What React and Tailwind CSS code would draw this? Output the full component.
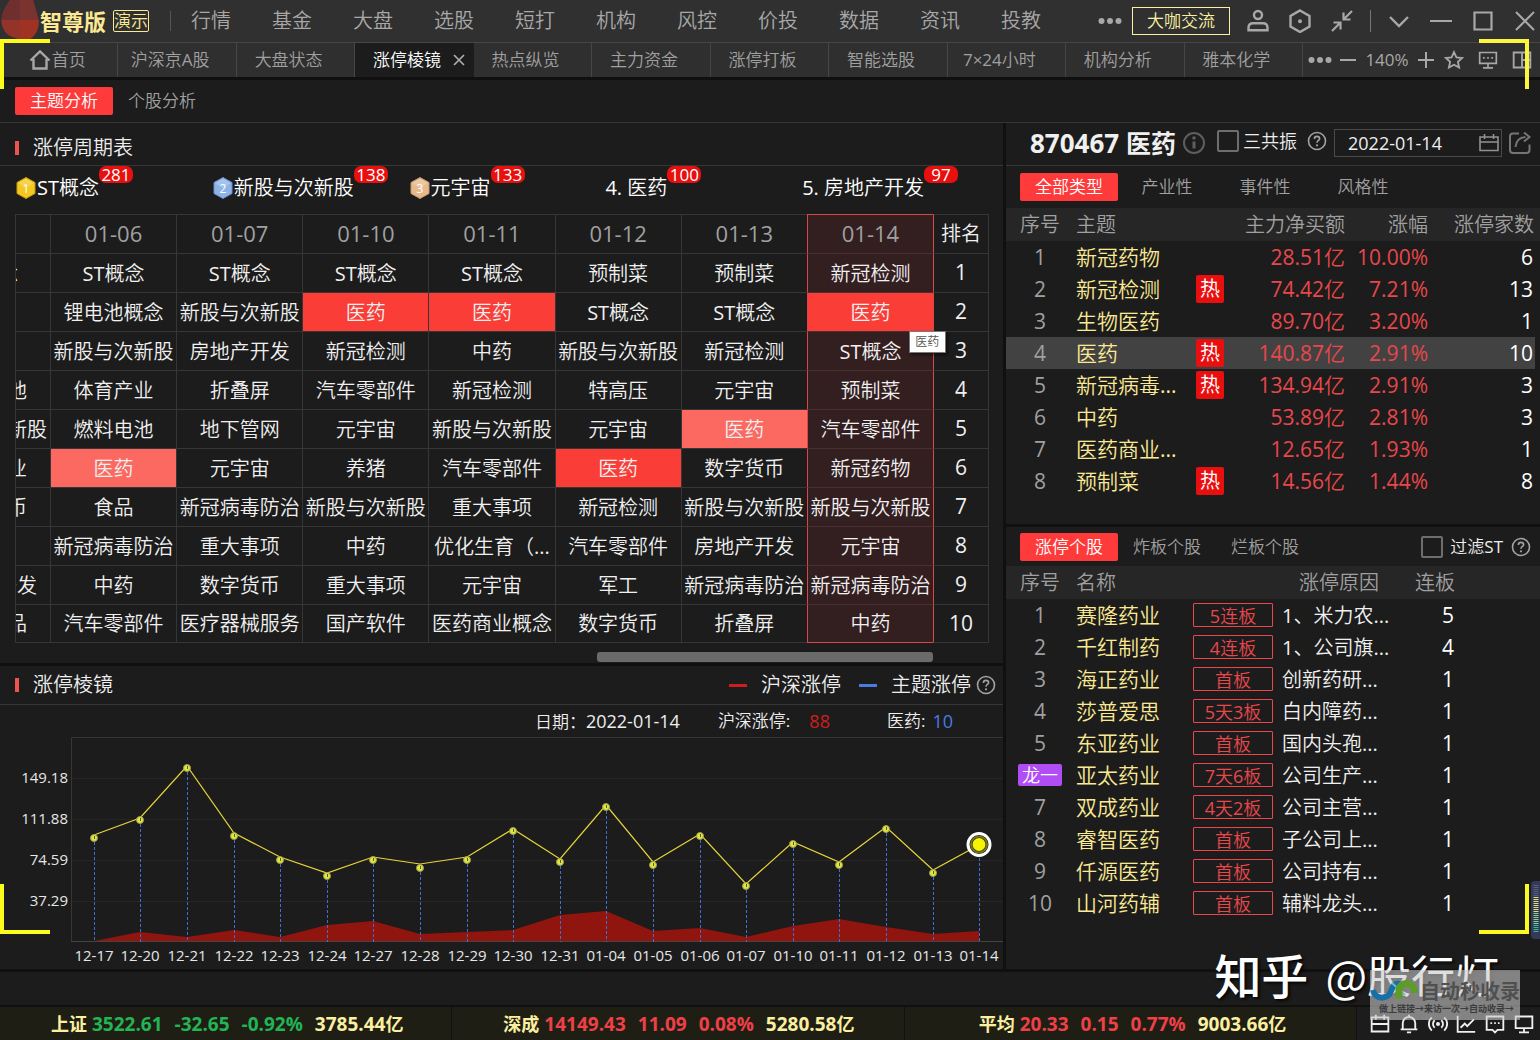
import React from "react";

const NAV = ["行情", "基金", "大盘", "选股", "短打", "机构", "风控", "价投", "数据", "资讯", "投教"];
const TABS = ["首页", "沪深京A股", "大盘状态", "涨停棱镜", "热点纵览", "主力资金", "涨停打板", "智能选股", "7×24小时", "机构分析", "雅本化学"];

const LEADERS = [
  { medal: "1", fill: "#f3c91f", edge: "#c99a10", name: "ST概念", count: 281 },
  { medal: "2", fill: "#8db4e8", edge: "#6b8fc4", name: "新股与次新股", count: 138 },
  { medal: "3", fill: "#e8b98c", edge: "#c79a70", name: "元宇宙", count: 133 },
  { name: "4. 医药", count: 100 },
  { name: "5. 房地产开发", count: 97 },
];

const DATES = ["01-06", "01-07", "01-10", "01-11", "01-12", "01-13", "01-14"];
const CYCLE = [
  ["ST概念", "ST概念", "ST概念", "ST概念", "ST概念", "预制菜", "预制菜", "新冠检测"],
  ["元宇宙", "锂电池概念", "新股与次新股", "医药", "医药", "ST概念", "ST概念", "医药"],
  ["中药", "新股与次新股", "房地产开发", "新冠检测", "中药", "新股与次新股", "新冠检测", "ST概念"],
  ["燃料电池", "体育产业", "折叠屏", "汽车零部件", "新冠检测", "特高压", "元宇宙", "预制菜"],
  ["新股与次新股", "燃料电池", "地下管网", "元宇宙", "新股与次新股", "元宇宙", "医药", "汽车零部件"],
  ["体育产业", "医药", "元宇宙", "养猪", "汽车零部件", "医药", "数字货币", "新冠药物"],
  ["数字货币", "食品", "新冠病毒防治", "新股与次新股", "重大事项", "新冠检测", "新股与次新股", "新股与次新股"],
  ["军工", "新冠病毒防治", "重大事项", "中药", "优化生育（...", "汽车零部件", "房地产开发", "元宇宙"],
  ["房地产开发", "中药", "数字货币", "重大事项", "元宇宙", "军工", "新冠病毒防治", "新冠病毒防治"],
  ["医美产品", "汽车零部件", "医疗器械服务", "国产软件", "医药商业概念", "数字货币", "折叠屏", "中药"],
];
const PALE = ["4-6", "5-1"];

const THEMES = [
  ["新冠药物", false, "28.51亿", "10.00%", 6],
  ["新冠检测", true, "74.42亿", "7.21%", 13],
  ["生物医药", false, "89.70亿", "3.20%", 1],
  ["医药", true, "140.87亿", "2.91%", 10],
  ["新冠病毒...", true, "134.94亿", "2.91%", 3],
  ["中药", false, "53.89亿", "2.81%", 3],
  ["医药商业...", false, "12.65亿", "1.93%", 1],
  ["预制菜", true, "14.56亿", "1.44%", 8],
];

const STOCKS = [
  ["赛隆药业", "5连板", "1、米力农...", 5],
  ["千红制药", "4连板", "1、公司旗...", 4],
  ["海正药业", "首板", "创新药研...", 1],
  ["莎普爱思", "5天3板", "白内障药...", 1],
  ["东亚药业", "首板", "国内头孢...", 1],
  ["亚太药业", "7天6板", "公司生产...", 1],
  ["双成药业", "4天2板", "公司主营...", 1],
  ["睿智医药", "首板", "子公司上...", 1],
  ["仟源医药", "首板", "公司持有...", 1],
  ["山河药辅", "首板", "辅料龙头...", 1],
];

const INDEXES = [
  { name: "上证", values: ["3522.61", "-32.65", "-0.92%"], amount: "3785.44", up: false },
  { name: "深成", values: ["14149.43", "11.09", "0.08%"], amount: "5280.58", up: true },
  { name: "平均", values: ["20.33", "0.15", "0.77%"], amount: "9003.66", up: true },
];

/* label, x, marker y, line y, area y */
const POINTS = [
  ["12-17", 94, 101, 98, 204],
  ["12-20", 140, 83, 81, 195],
  ["12-21", 187, 31, 29, 200],
  ["12-22", 234, 99, 96, 193],
  ["12-23", 280, 123, 120, 200],
  ["12-24", 327, 139, 136, 188],
  ["12-27", 373, 123, 120, 184],
  ["12-28", 420, 131, 127, 197],
  ["12-29", 467, 123, 120, 195],
  ["12-30", 513, 94, 92, 193],
  ["12-31", 560, 125, 122, 178],
  ["01-04", 606, 70, 68, 174],
  ["01-05", 653, 128, 125, 194],
  ["01-06", 700, 99, 97, 191],
  ["01-07", 746, 149, 147, 200],
  ["01-10", 793, 107, 105, 189],
  ["01-11", 839, 128, 125, 182],
  ["01-12", 886, 92, 90, 190],
  ["01-13", 933, 136, 133, 197],
  ["01-14", 979, 107, 108, 194],
];

function Icon({ size = 24, sw = 2, className = "", children, box = 24 }) {
  return (
    <svg width={size} height={size} viewBox={`0 0 ${box} ${box}`} fill="none" stroke="currentColor" strokeWidth={sw} className={`shrink-0 ${className}`} aria-hidden="true">
      {children}
    </svg>
  );
}

const IconUser = () => (
  <Icon sw={2.4}><circle cx="12" cy="6" r="4" /><path d="M2.500 21.200v-2.400c0-3 2-4.600 4.600-4.600h9.800c2.600 0 4.600 1.600 4.600 4.600v2.400z" /></Icon>
);
const IconHex = () => (
  <Icon sw={2.4}><path d="M12 1.500l9.500 5.500v10.500L12 23l-9.500-5.500V7z" /><circle cx="12" cy="12.200" r="2" fill="currentColor" stroke="none" /></Icon>
);
const IconShrink = () => (
  <Icon sw={2.2}><path d="M22 2l-8 8M13.500 3.500v7h7M2 22l8-8M3.500 13.500h7v7" /></Icon>
);
const IconHelp = ({ size = 20 }) => (
  <Icon size={size} box={20} sw={1.6} className="text-[#a2a2a2]">
    <circle cx="10" cy="10" r="8.500" />
    <path d="M7.400 8c0-1.600 1.100-2.600 2.600-2.600s2.600 1 2.600 2.300c0 1.700-2.600 1.900-2.600 4" />
    <circle cx="10" cy="14.300" r="1.100" fill="currentColor" stroke="none" />
  </Icon>
);
const Dots = () => (
  <Icon size={24} sw={0} className="text-[#a8a8a8]">
    <circle cx="3.500" cy="12" r="3" fill="currentColor" /><circle cx="12" cy="12" r="3" fill="currentColor" /><circle cx="20.500" cy="12" r="3" fill="currentColor" />
  </Icon>
);

function IconButton({ label, children }) {
  return <button type="button" aria-label={label} className="flex shrink-0 items-center justify-center">{children}</button>;
}

function TopBar() {
  return (
    <header className="relative flex h-[42px] items-center bg-[#303030] text-[#a8a8a8]">
      <svg width="42" height="42" viewBox="0 0 42 42" className="shrink-0" aria-hidden="true">
        <path d="M10 0C6 6 2 12 1.500 20c0 8 5 15 13 17c4 5 15 5 19-1c4-5 6-10 5-17L33 0z" fill="#8e352c" />
        <path d="M10 0h10v20H1.500C2 12 6 6 10 0z" fill="#6f2f2e" />
        <path d="M20 0h13l5 19v1H20z" fill="#7b3330" />
        <path d="M1.500 20H20v18c-10 1-18.500-6-18.500-18z" fill="#93342a" />
        <path d="M20 20h18.500c0 8-1 12-5 16c-3 4-9 5-13.500 3z" fill="#a03224" />
      </svg>
      <div className="-ml-[2px] font-['Open_Sans','Noto_Sans_CJK_SC',sans-serif] text-[22px] font-bold leading-[30px] text-[#fbe993]">智尊版</div>
      <div className="ml-[7px] h-[22px] rounded-[2px] border border-[#fbe993] text-[17px] leading-[20px] text-[#fbe993]">演示</div>
      <div className="ml-[21px] h-[20px] w-px bg-[#555]" />
      <nav className="ml-[20px] flex flex-1 gap-[41px] text-[20px] leading-[30px]">
        {NAV.map((n) => <a key={n} href="#" className="whitespace-nowrap">{n}</a>)}
      </nav>
      <div className="flex shrink-0 items-center pr-[3px]">
        <IconButton label="更多"><Dots /></IconButton>
        <button type="button" className="ml-[10px] h-[28px] w-[98px] border border-[#fbf0a0] text-[17px] leading-[26px] text-[#fbf0a0]">大咖交流</button>
        <div className="ml-[16px] flex gap-[18px]">
          <IconButton label="用户"><IconUser /></IconButton>
          <IconButton label="设置"><IconHex /></IconButton>
          <IconButton label="收起"><IconShrink /></IconButton>
        </div>
        <div className="ml-[16px] h-[22px] w-px bg-[#777]" />
        <div className="ml-[16px] flex gap-[18px]">
          <IconButton label="下拉"><Icon sw={2.4}><path d="M3 8l9 9 9-9" /></Icon></IconButton>
          <IconButton label="最小化"><Icon sw={2}><path d="M1 12h22" /></Icon></IconButton>
          <IconButton label="最大化"><Icon sw={2.2}><path d="M3.500 3.500h17v17h-17z" /></Icon></IconButton>
          <IconButton label="关闭"><Icon sw={2}><path d="M3 3l18 18M21 3L3 21" /></Icon></IconButton>
        </div>
      </div>
    </header>
  );
}

function TabBar() {
  return (
    <div className="flex h-[38px] items-stretch border-b-[3px] border-t border-b-[#101010] border-t-[#464646] bg-[#2f2f2f] text-[17px] leading-[34px] text-[#a0a0a0]">
      <div className="flex flex-1">
        {TABS.map((t) => {
          const active = t === "涨停棱镜";
          const tone = active ? "border-[#1c1c1c] bg-[#1c1c1c] text-white" : "border-[#464646]";
          return (
            <button
              key={t}
              type="button"
              className={`relative flex flex-1 basis-0 items-center justify-center whitespace-nowrap border-r px-[2px] ${tone}`}
            >
              {t === "首页" && (
                <Icon size={24} sw={2.4} className="text-[#a8a8a8]"><path d="M5.500 11v9.500h13V11M2.500 12.500L12 3.500l9.500 9" /></Icon>
              )}
              <span className={t === "首页" ? "mr-[4px]" : "mr-[14px]"}>{t}</span>
              {active && (
                <Icon size={12} box={12} sw={1.6} className="absolute right-[8px] text-[#b0b0b0]"><path d="M1 1l10 10M11 1L1 11" /></Icon>
              )}
            </button>
          );
        })}
      </div>
      <div className="flex w-[237px] shrink-0 items-center text-[#a8a8a8]">
        <div className="ml-[5px]"><IconButton label="更多标签"><Dots /></IconButton></div>
        <div className="ml-[7px] flex items-center gap-[7px]">
          <IconButton label="缩小"><Icon size={18} box={18} sw={2}><path d="M1 9h16" /></Icon></IconButton>
          <span className="w-[46px] text-center text-[17px] leading-[34px]">140%</span>
          <IconButton label="放大"><Icon size={18} box={18} sw={2}><path d="M1 9h16M9 1v16" /></Icon></IconButton>
        </div>
        <div className="ml-[9px] flex items-center gap-[14px]">
          <IconButton label="收藏"><Icon size={20} sw={2.2}><path d="M12 2.500l2.900 6.300 6.900.8-5.100 4.700 1.400 6.800L12 17.700l-6.100 3.400 1.400-6.800-5.100-4.700 6.900-.8z" /></Icon></IconButton>
          <IconButton label="屏幕"><Icon size={20} sw={2}><path d="M2 3h20v13H2zM12 16v5M6 21.500h12M6 9.500h2M11 9.500h2M16 9.500h2" /></Icon></IconButton>
          <IconButton label="布局"><Icon size={20} sw={2.2}><path d="M2 3h20v18H2zM12 3v18M12 12h10" /></Icon></IconButton>
        </div>
      </div>
    </div>
  );
}

function Pills({ items }) {
  return (
    <div className="flex text-[17px] leading-[28px]">
      {items.map((t, i) => (
        <button key={t} type="button" className={`h-[28px] w-[98px] rounded-[2px] ${i === 0 ? "bg-[#fe3b3a] text-white" : "text-[#a0a0a0]"}`}>{t}</button>
      ))}
    </div>
  );
}

function SectionTitle({ children }) {
  return (
    <h2 className="flex items-center gap-[14px] pl-[15px] text-[20px] font-normal leading-[30px] text-[#eee]">
      <span className="h-[14px] w-[4px] bg-[#ef5350]" />
      {children}
    </h2>
  );
}

function Leaders() {
  return (
    <ul className="grid h-[48px] grid-cols-5 pl-[15px] pr-[4px] pt-[7px] text-[20px] leading-[30px] text-white">
      {LEADERS.map((l) => (
        <li key={l.name} className="flex items-center self-start whitespace-nowrap">
          {l.medal && (
            <svg width="22" height="24" viewBox="0 0 22 24" className="shrink-0" aria-hidden="true">
              <path d="M11 1.500L20 6.500v11L11 22.500L2 17.500v-11z" fill={l.fill} stroke={l.edge} strokeLinejoin="round" />
              <path d="M11 2.500L19 7L11 12L3 7z" fill="#fff" opacity=".2" />
              <text x="11" y="16.500" textAnchor="middle" fontSize="12" fill="#fff">{l.medal}</text>
            </svg>
          )}
          <span className="relative">
            {l.name}
            <span className="absolute -top-[7px] left-full h-[17px] w-[34px] rounded-[7px] bg-[#e8100f] text-center text-[17px] leading-[17px]">{l.count}</span>
          </span>
        </li>
      ))}
    </ul>
  );
}

function CycleTable() {
  const line = "border-l border-t border-[#363636]";
  return (
    <table className="ml-[15px] w-[calc(100%-29px)] table-fixed border-separate border-spacing-0 text-center text-[20px] leading-[30px] text-[#f0f0f0]">
      <colgroup>
        <col className="w-[35px]" />
        {DATES.map((d) => <col key={d} />)}
        <col className="w-[56px]" />
      </colgroup>
      <thead>
        <tr className="h-[39px]">
          <th className={line} aria-label="更早" />
          {DATES.map((d, i) => (
            <th key={d} className={`border-l border-t p-0 pb-[2px] text-[22px] font-normal text-[#a0a0a0] ${i === 6 ? "border-[#d9474b] bg-[#331e20]" : "border-[#363636]"}`}>{d}</th>
          ))}
          <th className="whitespace-nowrap border-l border-r border-t border-l-[#d9474b] border-r-[#363636] border-t-[#363636] p-0 font-normal">排名</th>
        </tr>
      </thead>
      <tbody>
        {CYCLE.map((row, r) => (
          <tr key={r} className="h-[39px]">
            {row.map((cell, c) => {
              const last = r === CYCLE.length - 1;
              if (c === 0) {
                return (
                  <td key={c} className={`p-0 pt-px ${line} ${last ? "border-b" : ""}`}>
                    <div className="flex justify-end overflow-hidden"><div className="w-[126px] shrink-0">{cell}</div></div>
                  </td>
                );
              }
              const hot = cell === "医药";
              const pale = PALE.includes(`${r}-${c}`);
              const bg = hot ? (pale ? "bg-[#fb6961]" : "bg-[#fa3d37]") : c === 7 ? "bg-[#331e20]" : "";
              const edge = c === 7 ? `border-l-[#d9474b] border-t-[#4a3032] ${last ? "border-b border-b-[#d9474b]" : ""}` : `border-[#363636] ${last ? "border-b" : ""}`;
              return (
                <td key={c} className={`relative whitespace-nowrap border-l border-t p-0 pt-px ${edge} ${bg}`}>
                  {cell}
                  {r === 1 && c === 7 && (
                    <span role="tooltip" className="absolute left-[101px] top-[38px] z-10 h-[22px] w-[37px] border border-[#777] bg-white text-center text-[12px] leading-[20px] text-[#555] shadow-[2px_2px_3px_rgba(0,0,0,0.5)]">医药</span>
                  )}
                </td>
              );
            })}
            <td className={`border-l border-r border-t border-l-[#d9474b] border-r-[#363636] border-t-[#363636] p-0 pb-[2px] text-[21px] ${r === 9 ? "border-b border-b-[#363636]" : ""}`}>{r + 1}</td>
          </tr>
        ))}
      </tbody>
    </table>
  );
}

function TrendChart() {
  const linePts = POINTS.map((p) => `${p[1]},${p[3]}`).join(" ");
  const area = `94,205 ${POINTS.map((p) => `${p[1]},${p[4]}`).join(" ")} 979,205`;
  return (
    <svg viewBox="0 0 1003 232" className="block w-full" role="img" aria-label="涨停走势">
      <path d="M71.500 205V.500H1003" fill="none" stroke="#363636" />
      {[["149.18", 41], ["111.88", 82], ["74.59", 123], ["37.29", 164]].map(([t, y]) => (
        <g key={t}>
          <path d={`M72 ${y + 0.5}H1003`} stroke="#262626" />
          <text x="68" y={y + 5} textAnchor="end" fontSize="15" fill="#e6e6e6">{t}</text>
        </g>
      ))}
      <polygon points={area} fill="#8f150e" />
      <path d="M71 204.500H1003" stroke="#444" />
      {POINTS.map((p) => (
        <path key={p[0]} d={`M${p[1] + 0.5} ${p[2] + 4}V205`} stroke="#3f6fd0" strokeDasharray="3 2" />
      ))}
      <polyline points={linePts} fill="none" stroke="#e8d43a" strokeWidth="1.200" />
      {POINTS.slice(0, -1).map((p) => (
        <g key={p[0]}>
          <circle cx={p[1]} cy={p[2]} r="3.500" fill="#dfe73a" stroke="#9a9a58" />
          <path d={`M${p[1] + 0.5} ${p[2] - 2}v3`} stroke="#5a5a20" />
        </g>
      ))}
      <circle cx="979" cy="107.500" r="11" fill="#1c1c1c" stroke="#fff" strokeWidth="3" />
      <circle cx="979" cy="107.500" r="8" fill="none" stroke="#77771c" strokeWidth="2" />
      <circle cx="979" cy="107.500" r="6.500" fill="#f8f400" />
      {POINTS.map((p) => (
        <text key={p[0]} x={p[1]} y="224" textAnchor="middle" fontSize="15" fill="#e6e6e6">{p[0]}</text>
      ))}
    </svg>
  );
}

function LeftPanel() {
  return (
    <section className="min-w-0 flex-1">
      <div className="flex h-[43px] items-center border-b border-[#363636] pt-[8px]"><SectionTitle>涨停周期表</SectionTitle></div>
      <Leaders />
      <CycleTable />
      <div className="flex h-[20px] justify-end pr-[70px] pt-[9px]"><div className="h-[10px] w-[36%] rounded-[3px] bg-[#6a6a6a]" /></div>
      <div className="flex h-[42px] items-center justify-between border-b border-t-[3px] border-b-[#363636] border-t-[#101010]">
        <SectionTitle>涨停棱镜</SectionTitle>
        <div className="flex items-center pr-[7px] text-[20px] leading-[30px] text-[#eee]">
          <span className="mr-[14px] h-[3px] w-[18px] bg-[#d01c1c]" />沪深涨停
          <span className="ml-[18px] mr-[14px] h-[3px] w-[18px] bg-[#4a7be0]" />主题涨停
          <span className="ml-[5px]"><IconHelp /></span>
        </div>
      </div>
      <div className="flex h-[32px] items-center justify-end pr-[50px] text-[17px] leading-[26px] text-[#eee]">
        <span>日期：<span className="text-[18px]">2022-01-14</span></span>
        <span className="ml-[38px]">沪深涨停:</span>
        <span className="ml-[19px] text-[18px] text-[#d01c1c]">88</span>
        <span className="ml-[57px]">医药:</span>
        <span className="ml-[7px] text-[18px] text-[#4a7be0]">10</span>
      </div>
      <TrendChart />
    </section>
  );
}

function CheckLabel({ id, label, text }) {
  return (
    <div className="flex items-center">
      <input id={id} type="checkbox" className="h-[22px] w-[22px] shrink-0 appearance-none rounded-[2px] border-2 border-[#6e6e6e]" />
      <label htmlFor={id} className={`whitespace-nowrap text-[#eee] ${text}`}>{label}</label>
    </div>
  );
}

function RightPanel() {
  return (
    <aside className="w-[537px] shrink-0 border-l-[3px] border-[#101010]">
      <div className="flex h-[43px] items-center border-b border-[#363636] pb-[2px] pl-[24px] pr-[8px]">
        <h1 className="whitespace-nowrap font-['Open_Sans','Noto_Sans_CJK_SC',sans-serif] text-[26px] font-bold leading-[34px] text-[#f0f0f0]">870467 <span className="text-[25px]">医药</span></h1>
        <div className="ml-[6px] flex-1">
          <IconButton label="信息"><Icon size={24} sw={2} className="text-[#5e5e5e]"><circle cx="12" cy="12" r="10" /><path d="M12 10.500v7" strokeWidth="3" /><circle cx="12" cy="7" r="1.800" fill="currentColor" stroke="none" /></Icon></IconButton>
        </div>
        <div className="flex items-center pb-[4px]">
          <CheckLabel id="resonance" label="三共振" text="ml-[4px] text-[18px] leading-[26px]" />
          <div className="ml-[10px] mr-[7px]"><IconButton label="帮助"><IconHelp /></IconButton></div>
        </div>
        <div className="flex h-[28px] w-[168px] items-center border border-[#4a4a4a] pl-[13px] pr-[2px]">
          <input aria-label="日期" defaultValue="2022-01-14" className="w-0 flex-1 bg-transparent text-[18px] leading-[26px] text-[#eee] outline-none" />
          <IconButton label="选择日期"><Icon size={20} box={20} sw={1.6} className="text-[#8f9196]"><path d="M1 4h18v13.500H1zM1 9h18M5.500 1v5M14.500 1v5" /></Icon></IconButton>
        </div>
        <div className="ml-[6px]">
          <IconButton label="分享"><Icon size={24} sw={2} className="text-[#757575]"><path d="M11 2.500H5a3 3 0 0 0-3 3V19a3 3 0 0 0 3 3h13.500a3 3 0 0 0 3-3v-5.500M7.500 16c.5-6 4-9.500 10-10M16 1.500L21.500 6L16 10.500" /></Icon></IconButton>
        </div>
      </div>
      <div className="flex h-[42px] items-center pl-[14px]"><Pills items={["全部类型", "产业性", "事件性", "风格性"]} /></div>
      <div className="pb-[27px]">
        <table className="w-[529px] table-fixed border-collapse text-[21px] leading-[30px]">
          <colgroup><col className="w-[68px]" /><col className="w-[120px]" /><col className="w-[30px]" /><col className="w-[121px]" /><col className="w-[83px]" /><col /></colgroup>
          <thead>
            <tr className="h-[33px] bg-[#262626] text-[20px] text-[#a0a0a0] shadow-[8px_0_0_#262626]">
              <th className="p-0 font-normal">序号</th>
              <th className="p-0 pl-[2px] text-left font-normal">主题</th>
              <th />
              <th className="p-0 text-right font-normal">主力净买额</th>
              <th className="p-0 text-right font-normal">涨幅</th>
              <th className="whitespace-nowrap p-0 pr-[1px] text-right font-normal">涨停家数</th>
            </tr>
          </thead>
          <tbody>
            {THEMES.map(([name, hot, amt, pct, n], i) => (
              <tr key={name} className={`h-[32px] ${i === 3 ? "bg-[#424242]" : ""}`}>
                <td className="p-0 text-center text-[#a0a0a0]">{i + 1}</td>
                <td className="whitespace-nowrap p-0 pl-[2px] text-[#fbe993]">{name}</td>
                <td className="p-0">{hot && <span className="ml-[2px] block h-[28px] w-[28px] rounded-[2px] bg-[#e8100f] text-center text-[20px] leading-[28px] text-white">热</span>}</td>
                <td className="whitespace-nowrap p-0 text-right text-[#e8474b]">{amt}</td>
                <td className="p-0 text-right text-[#e8474b]">{pct}</td>
                <td className="p-0 pr-[2px] text-right text-white">{n}</td>
              </tr>
            ))}
          </tbody>
        </table>
      </div>
      <div className="flex h-[42px] items-center border-t-[3px] border-[#101010] pl-[14px] pr-[9px]">
        <Pills items={["涨停个股", "炸板个股", "烂板个股"]} />
        <div className="ml-auto"><CheckLabel id="filter-st" label="过滤ST" text="ml-[7px] text-[17px] leading-[26px]" /></div>
        <div className="ml-[8px]"><IconButton label="帮助"><IconHelp /></IconButton></div>
      </div>
      <table className="w-full table-fixed border-collapse text-[21px] leading-[30px]">
        <colgroup><col className="w-[68px]" /><col className="w-[119px]" /><col className="w-[80px]" /><col className="w-[110px]" /><col className="w-[72px]" /><col /></colgroup>
        <thead>
          <tr className="h-[33px] bg-[#262626] text-[20px] text-[#a0a0a0]">
            <th className="p-0 font-normal">序号</th>
            <th className="p-0 pl-[2px] text-left font-normal">名称</th>
            <th />
            <th className="p-0 pr-[4px] text-right font-normal">涨停原因</th>
            <th className="p-0 text-right font-normal">连板</th>
            <th />
          </tr>
        </thead>
        <tbody>
          {STOCKS.map(([name, tag, why, n], i) => (
            <tr key={name} className="h-[32px]">
              <td className="p-0 text-center text-[#a0a0a0]">
                {i === 5 ? <span className="mx-auto block h-[22px] w-[44px] rounded-[2px] bg-[#b04df5] text-[18px] leading-[22px] text-white">龙一</span> : i + 1}
              </td>
              <td className="whitespace-nowrap p-0 pl-[2px] text-[#fbe993]">{name}</td>
              <td className="p-0"><span className="block h-[24px] rounded-[1px] border border-[#e8474b] text-center text-[18px] leading-[24px] text-[#e8474b]">{tag}</span></td>
              <td className="whitespace-nowrap p-0 pl-[9px] pt-[2px] text-[20px] text-[#f0f0f0]">{why}</td>
              <td className="p-0 pr-[1px] text-right text-white">{n}</td>
              <td />
            </tr>
          ))}
        </tbody>
      </table>
    </aside>
  );
}

function StatusBar() {
  return (
    <footer className="flex h-[35px] items-stretch border-t-2 border-[#101010] bg-[#1f1e14] font-['Open_Sans','Noto_Sans_CJK_SC',sans-serif] text-[19px] font-bold leading-[28px]">
      <div className="grid flex-1 grid-cols-3">
        {INDEXES.map((x, i) => (
          <div key={x.name} className={`flex items-center gap-[12px] whitespace-nowrap border-r border-[#111] ${i === 2 ? "pl-[74px]" : "pl-[51px]"}`}>
            <span className="text-[18px] text-[#fbefa0]">{x.name}</span>
            {x.values.map((v, j) => (
              <span key={v} className={`${j === 0 ? "-ml-[7px]" : ""} ${x.up ? "text-[#ee4046]" : "text-[#22b455]"}`}>{v}</span>
            ))}
            <span className="text-[#fbefa0]">{x.amount}<span className="text-[18px]">亿</span></span>
          </div>
        ))}
      </div>
      <div className="flex w-[183px] shrink-0 items-center justify-between bg-[#1c1c1c] pl-[13px] pr-[6px] text-[#f0f0f0]">
        <IconButton label="日历"><Icon size={20} sw={2.2}><path d="M2 4h20v17H2zM2 12h20M7 1v6M17 1v6" /></Icon></IconButton>
        <IconButton label="提醒"><Icon size={20} sw={2.2}><path d="M2 18.500h20M4.500 18V11a7.500 7.500 0 0 1 15 0v7M9.500 22h5M12 1v3" /></Icon></IconButton>
        <IconButton label="信号"><Icon size={20} sw={2.2}><circle cx="12" cy="12" r="2.400" fill="currentColor" stroke="none" /><path d="M8 7.500a6 6 0 0 0 0 9M16 7.500a6 6 0 0 1 0 9M4.500 4a11 11 0 0 0 0 16M19.500 4a11 11 0 0 1 0 16" /></Icon></IconButton>
        <IconButton label="走势"><Icon size={20} sw={2.2}><path d="M2 2v19.500h21M5.500 16.500l5-5 3 3 8-8" /></Icon></IconButton>
        <IconButton label="消息"><Icon size={20} sw={2.2}><path d="M2 3h20v16h-7l-3 3-3-3H2zM6.500 11h2M11 11h2M15.500 11h2" /></Icon></IconButton>
        <IconButton label="终端"><Icon size={20} sw={2.2}><path d="M2 3h20v14H2zM12 17v4.500M6 22h12" /></Icon></IconButton>
      </div>
    </footer>
  );
}

function Overlays() {
  return (
    <div className="pointer-events-none absolute inset-0 z-20">
      <div className="absolute left-0 top-[39px] h-[50px] w-[50px] border-l-4 border-t-4 border-[#fcfc1c]" />
      <div className="absolute right-[11px] top-[39px] h-[50px] w-[50px] border-r-4 border-t-4 border-[#fcf540]" />
      <div className="absolute bottom-[106px] left-0 h-[50px] w-[50px] border-b-4 border-l-4 border-[#fcfc1c]" />
      <div className="absolute bottom-[106px] right-[11px] h-[50px] w-[50px] border-b-4 border-r-4 border-[#fcf920]" />
      <svg width="9" height="58" viewBox="0 0 9 58" className="absolute bottom-[101px] right-0" aria-hidden="true">
        <rect x="0" y="0" width="14" height="58" rx="4" fill="#323a55" />
        <path d="M5 4v12" stroke="#566080" strokeWidth="5" strokeDasharray="1 1" />
        <path d="M5 16v16" stroke="#e6dc80" strokeWidth="5" strokeDasharray="1 1" />
        <path d="M5 32v12" stroke="#8fd08a" strokeWidth="5" strokeDasharray="1 1" />
        <path d="M5 44v8" stroke="#35b9a0" strokeWidth="5" strokeDasharray="1 1" />
      </svg>
      <div className="absolute bottom-[36px] right-[41px] flex items-center whitespace-nowrap font-['Noto_Sans_CJK_SC',sans-serif] text-white [text-shadow:2px_2px_3px_rgba(0,0,0,0.8)]">
        <span className="text-[47px] font-medium leading-[60px]">知乎</span>
        <span className="ml-[17px] text-[44px] leading-[60px]">@股行灯</span>
      </div>
      <div className="absolute bottom-[20px] right-[20px] h-[50px] w-[150px] bg-[#c8c8c8]/60 font-['Noto_Sans_CJK_SC',sans-serif]">
        <svg width="50" height="32" viewBox="0 0 50 32" className="absolute left-0 top-[5px]" aria-hidden="true">
          <path d="M3 15c2 10 15 10 18 1c2-6 5-8 9-7" fill="none" stroke="#176fa8" strokeWidth="6" />
          <path d="M22 8l13 12" fill="none" stroke="#6fb7c9" strokeWidth="2" />
          <path d="M29 24V14c2-8 15-8 16 4" fill="none" stroke="#5d9c28" strokeWidth="7" />
        </svg>
        <div className="absolute left-[50px] top-[8px] whitespace-nowrap text-[20px] font-bold leading-[26px] text-[#505050]">自动秒收录</div>
        <div className="absolute left-[9px] top-[32px] whitespace-nowrap text-[9px] font-bold leading-[14px] text-[#3c3c3c]">做上链接→来访一次→自动收录→</div>
      </div>
    </div>
  );
}

export default function App() {
  return (
    <div className="relative flex min-h-screen flex-col overflow-hidden bg-[#1c1c1c] font-['Open_Sans','Noto_Sans_CJK_SC_DemiLight','Noto_Sans_CJK_SC',sans-serif] font-normal">
      <TopBar />
      <TabBar />
      <div className="flex h-[43px] items-center border-b border-[#363636] pl-[15px]"><Pills items={["主题分析", "个股分析"]} /></div>
      <main className="flex border-b-[3px] border-[#101010]">
        <LeftPanel />
        <RightPanel />
      </main>
      <div className="flex-1" />
      <StatusBar />
      <Overlays />
    </div>
  );
}
